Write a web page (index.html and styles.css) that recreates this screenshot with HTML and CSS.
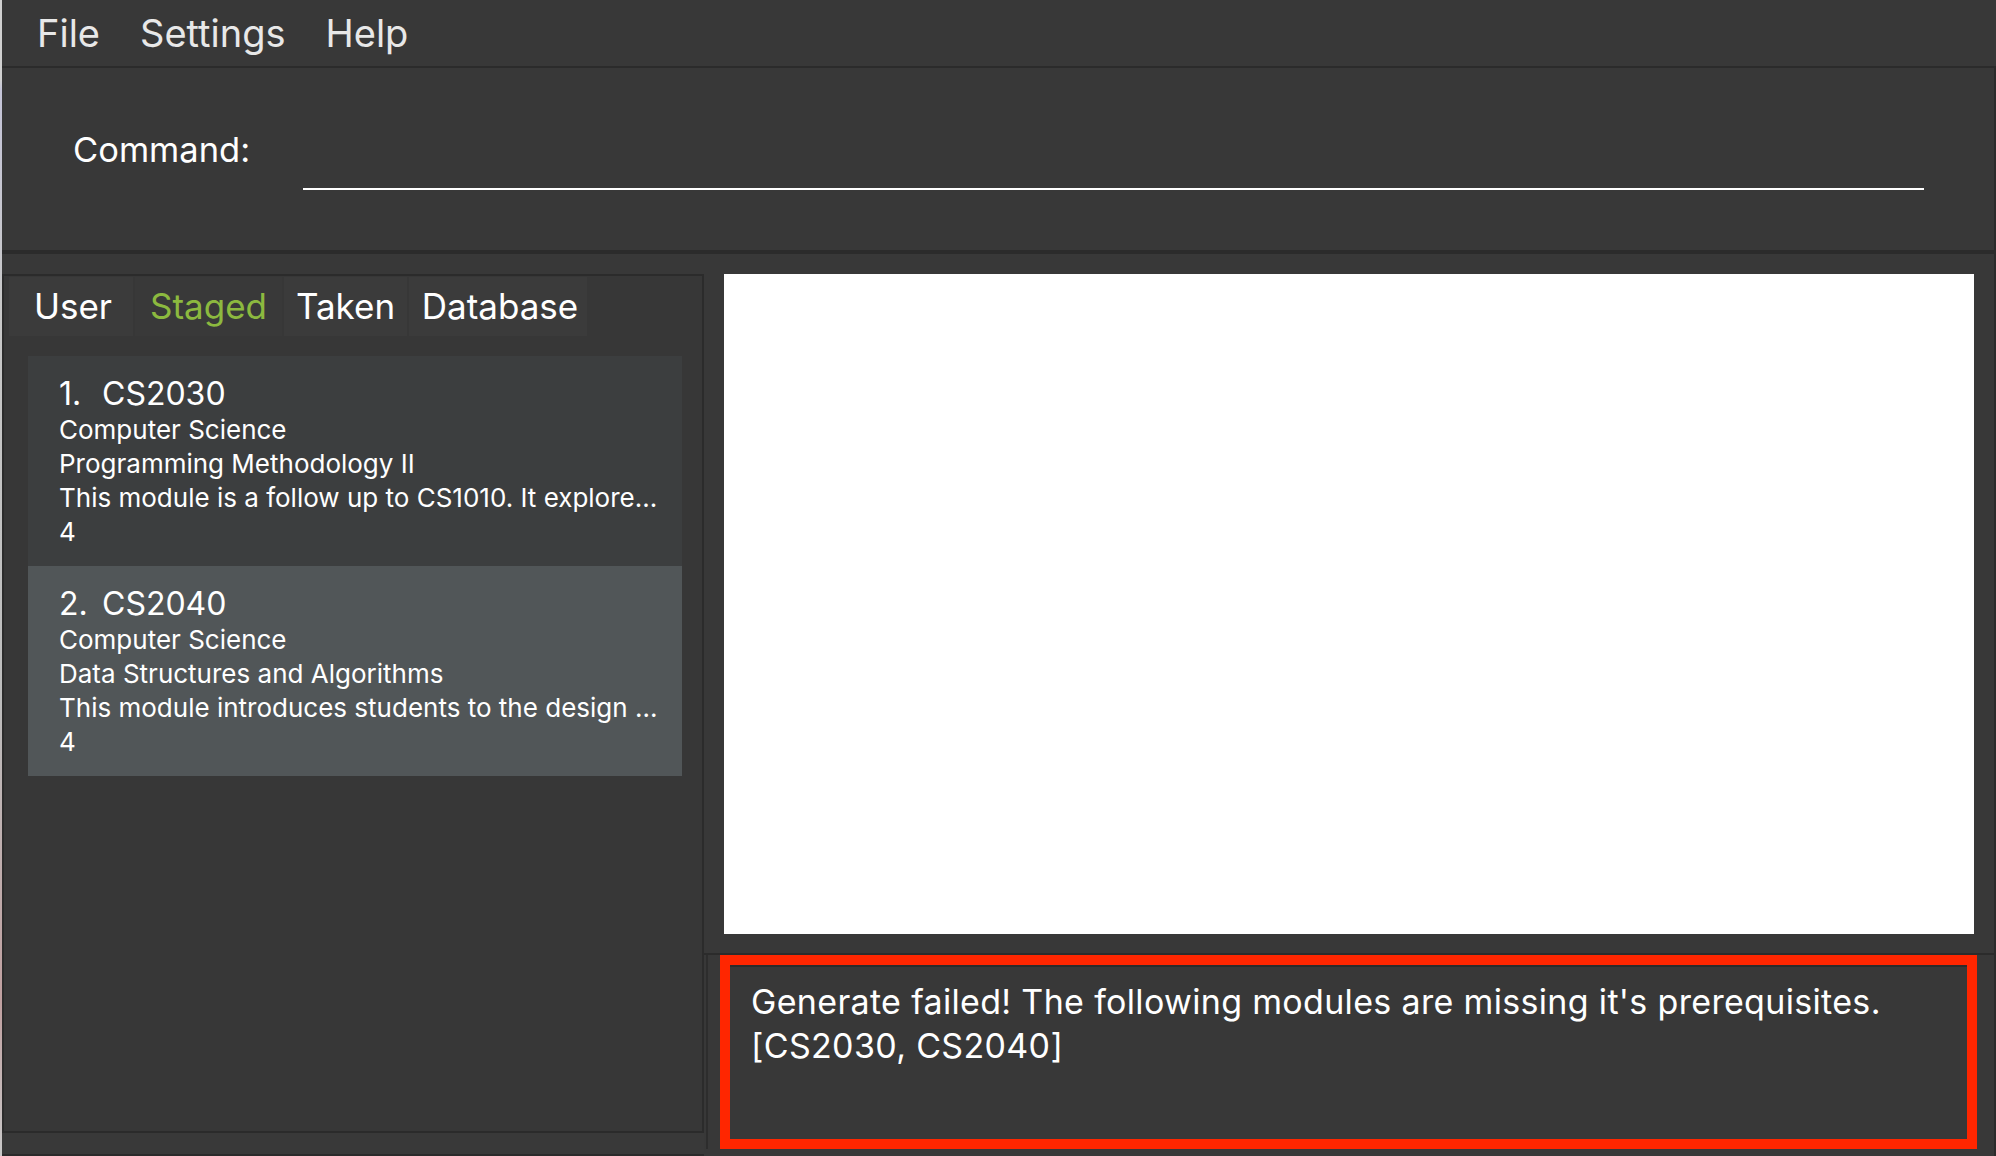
FILE: index.html
```html
<!DOCTYPE html>
<html lang="en">
<head>
<meta charset="utf-8">
<title>Module Planner</title>
<link rel="stylesheet" href="styles.css">
</head>
<body>
<div class="window">
  <div class="edge"></div>
  <div class="app">
    <nav class="menubar">
      <span class="menu-item">File</span>
      <span class="menu-item">Settings</span>
      <span class="menu-item">Help</span>
    </nav>
    <section class="command">
      <div class="command-label">Command:</div>
      <div class="command-field"></div>
    </section>
    <main class="main">
      <div class="left">
        <div class="list-wrap">
          <div class="list-box">
            <div class="tabs">
              <div class="tab tab-user">User</div>
              <div class="tab tab-staged active">Staged</div>
              <div class="tab tab-taken">Taken</div>
              <div class="tab tab-database">Database</div>
            </div>
            <div class="cards">
              <div class="card card-even">
                <div class="card-title"><span class="card-idx">1.</span><span>CS2030</span></div>
                <div class="card-line">Computer Science</div>
                <div class="card-line">Programming Methodology II</div>
                <div class="card-line">This module is a follow up to CS1010. It explore...</div>
                <div class="card-line">4</div>
              </div>
              <div class="card card-odd">
                <div class="card-title"><span class="card-idx">2.</span><span>CS2040</span></div>
                <div class="card-line">Computer Science</div>
                <div class="card-line">Data Structures and Algorithms</div>
                <div class="card-line">This module introduces students to the design ...</div>
                <div class="card-line">4</div>
              </div>
            </div>
          </div>
        </div>
        <div class="status"></div>
      </div>
      <div class="right">
        <div class="browser"><div class="browser-view"></div></div>
        <div class="result">
          <div class="result-inner">
            <div class="result-box">
              <div class="result-text">Generate failed! The following modules are missing it's prerequisites.<br>[CS2030, CS2040]</div>
            </div>
          </div>
        </div>
      </div>
    </main>
  </div>
</div>
</body>
</html>
```

FILE: styles.css
```css
* { box-sizing: border-box; }

html, body {
  margin: 0;
  width: 1996px;
  height: 1156px;
  overflow: hidden;
  background: #383838;
  font-family: Inter, "Liberation Sans", sans-serif;
  color: #ffffff;
}

.window {
  display: flex;
  height: 1156px;
}

.edge {
  width: 2px;
  flex: none;
  background: linear-gradient(to bottom, #d0d0d0 0, #d0d0d0 80px, #c4c4d8 90px, #c8c8c8 300px, #bdbdbd 700px, #c0a0a0 1000px, #c8c8c8 1156px);
}

.app {
  flex: 1;
  min-width: 0;
  display: flex;
  flex-direction: column;
}

/* Menu bar */
.menubar {
  height: 68px;
  flex: none;
  display: flex;
  align-items: center;
  gap: 40px;
  padding-left: 35px;
  border-bottom: 2px solid #2b2b2b;
  font-size: 38px;
  line-height: 66px;
  color: #e8e8e8;
}

/* Command box */
.command {
  height: 186px;
  flex: none;
  display: flex;
  align-items: flex-start;
  padding: 62px 70px 0 71px;
  border-bottom: 4px solid #2b2b2b;
  border-right: 2px solid #2b2b2b;
}

.command-label {
  width: 230px;
  flex: none;
  font-size: 34.5px;
  line-height: 40px;
}

.command-field {
  flex: 1;
  height: 60px;
  border-bottom: 2px solid #ffffff;
}

/* Main split */
.main {
  flex: 1;
  min-height: 0;
  display: flex;
  border-right: 2px solid #2b2b2b;
}

.left {
  width: 702px;
  flex: none;
  display: flex;
  flex-direction: column;
}

.list-wrap {
  flex: 1;
  padding-top: 20px;
  display: flex;
  flex-direction: column;
}

.list-box {
  flex: 1;
  border: 2px solid #2b2b2b;
  background: #373737;
}

.tabs {
  display: flex;
  gap: 2px;
  height: 60px;
  padding: 1px 0 0 5px;
}

.tab {
  height: 59px;
  line-height: 59px;
  text-align: center;
  font-size: 35px;
  background: #3b3b3b;
  color: #ffffff;
}

.tab-user { width: 124px; padding-left: 4px; }
.tab-staged { width: 147px; }
.tab-taken { width: 123px; }
.tab-database { width: 178px; padding-left: 4px; }

.tab.active {
  color: #8cb93f;
  background: #393939;
}

.cards {
  padding: 20px 20px 0 24px;
}

.card {
  height: 210px;
  padding: 18px 0 0 31px;
  overflow: hidden;
}

.card-even { background: #3c3e3f; }
.card-odd { background: #515658; }

.card-title {
  font-size: 32px;
  line-height: 40px;
  white-space: nowrap;
}

.card-idx {
  display: inline-block;
  width: 43px;
}

.card-line {
  font-size: 26px;
  line-height: 34px;
  white-space: nowrap;
}

.card-title + .card-line {
  margin-top: -1px;
}

.status {
  height: 23px;
  flex: none;
  background: #393939;
  border-bottom: 2px solid #2b2b2b;
}

/* Right side */
.right {
  flex: 1;
  min-width: 0;
  display: flex;
  flex-direction: column;
}

.browser {
  height: 701px;
  flex: none;
  padding: 20px 20px 0 20px;
  border-bottom: 2px solid #2b2b2b;
}

.browser-view {
  height: 660px;
  background: #ffffff;
}

.result {
  flex: 1;
  display: flex;
  padding: 0 17px 7px 2px;
}

.result-inner {
  flex: 1;
  display: flex;
  border-left: 2px solid #2d2d2d;
  padding-left: 12px;
}

.result-box {
  flex: 1;
  border: 10px solid #ff2600;
  display: flex;
  flex-direction: column;
}

.result-text {
  flex: 1;
  border-top: 2px solid #2b2b2b;
  padding: 13px 21px;
  font-size: 34px;
  line-height: 44px;
  letter-spacing: 0.33px;
  color: #ffffff;
}
```
